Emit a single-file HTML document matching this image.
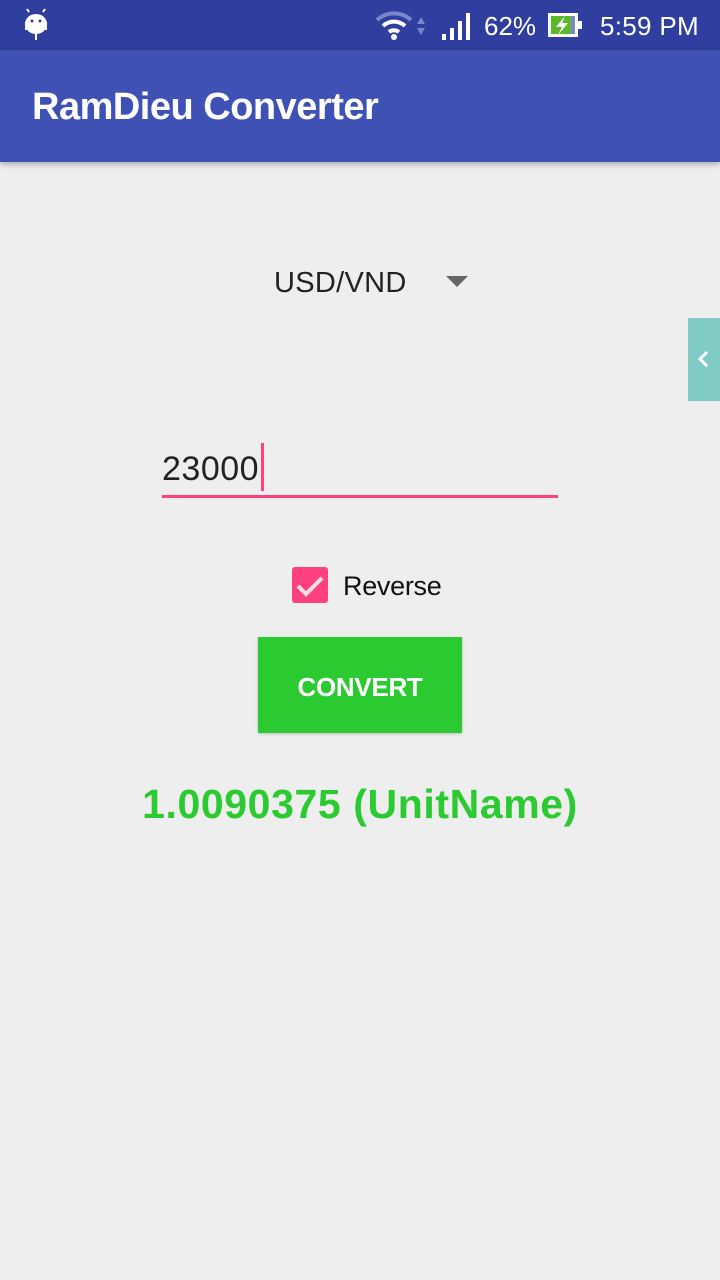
<!DOCTYPE html>
<html><head><style>
body{margin:0;width:720px;height:1280px;background:#eeeeee;font-family:"Liberation Sans",sans-serif;position:relative;overflow:hidden}
.sb{position:absolute;top:0;left:0;width:720px;height:50px;background:#303f9f;color:#fff}
.ab{position:absolute;top:50px;left:0;width:720px;height:112px;background:#3f51b5;box-shadow:0 2px 6px rgba(0,0,0,.3)}
.ab span{position:absolute;left:32px;top:36px;font-size:38px;color:#fff;font-weight:bold;letter-spacing:-0.5px}
.t{position:absolute;white-space:nowrap}
</style></head><body>
<div class="sb">
<svg width="720" height="50" style="position:absolute;left:0;top:0">
<ellipse cx="36" cy="24" rx="11" ry="10" fill="#fff"/><rect x="25" y="22" width="22" height="8" fill="#fff"/>
<line x1="29" y1="12" x2="27" y2="9" stroke="#fff" stroke-width="2"/><line x1="43" y1="12" x2="45" y2="9" stroke="#fff" stroke-width="2"/>
<rect x="35" y="30" width="2" height="10" fill="#fff"/>
<circle cx="32" cy="21" r="1.5" fill="#303f9f"/><circle cx="40" cy="21" r="1.5" fill="#303f9f"/>
<path d="M377 20 A25 25 0 0 1 411 20" stroke="#7986cb" stroke-width="4" fill="none"/>
<path d="M383 26 A16 16 0 0 1 405 26" stroke="#fff" stroke-width="4" fill="none"/>
<path d="M389 32 A8 8 0 0 1 399 32" stroke="#fff" stroke-width="4" fill="none"/>
<circle cx="394" cy="37" r="3" fill="#fff"/>
<path d="M417 24 L421 17 L425 24Z M417 28 L425 28 L421 35Z" fill="#7986cb"/>
<rect x="442" y="34" width="4" height="6" fill="#fff"/><rect x="450" y="28" width="4" height="12" fill="#fff"/><rect x="458" y="21" width="4" height="19" fill="#fff"/><rect x="466" y="13" width="4" height="27" fill="#fff"/>
<rect x="548" y="13" width="30" height="24" fill="#fff"/><rect x="578" y="21" width="4" height="8" fill="#fff"/>
<rect x="551" y="16" width="20" height="18" fill="#5cb82a"/><rect x="571" y="16" width="4" height="18" fill="#7986cb"/>
<path d="M565 16 L556 27 L562 27 L558 35 L568 23 L562 23 Z" fill="#fff"/>
</svg>
<span class="t" style="left:484px;top:11px;font-size:26px">62%</span>
<span class="t" style="left:600px;top:11px;font-size:26px;letter-spacing:0.3px">5:59 PM</span>
</div>
<div class="ab"><span>RamDieu Converter</span></div>
<span class="t" style="left:274px;top:267px;font-size:29px;color:#222;letter-spacing:0.3px">USD/VND</span>
<svg style="position:absolute;left:446px;top:276px" width="22" height="12"><path d="M0 0H22L11 11Z" fill="#666"/></svg>
<div style="position:absolute;left:688px;top:318px;width:32px;height:83px;background:#80cbc4"></div>
<svg style="position:absolute;left:696px;top:350px" width="14" height="18"><path d="M11 2L4 9L11 16" stroke="#fff" stroke-width="3" fill="none"/></svg>
<span class="t" style="left:162px;top:450px;font-size:34px;color:#222;letter-spacing:0.5px">23000</span>
<div style="position:absolute;left:261px;top:443px;width:3px;height:48px;background:#ff4081"></div>
<div style="position:absolute;left:162px;top:495px;width:396px;height:3px;background:#ff4081"></div>
<div style="position:absolute;left:292px;top:567px;width:36px;height:36px;background:#ff4081;border-radius:3px"></div>
<svg style="position:absolute;left:292px;top:567px" width="36" height="36"><path d="M6 19L14 27L30 11" stroke="#f6e0e8" stroke-width="4" fill="none"/></svg>
<span class="t" style="left:343px;top:571px;font-size:27px;color:#111;letter-spacing:-0.3px">Reverse</span>
<div style="position:absolute;left:258px;top:637px;width:204px;height:96px;background:#2bca30;box-shadow:0 1px 3px rgba(0,0,0,.2)"></div>
<span class="t" style="left:258px;width:204px;text-align:center;top:672px;font-size:26px;font-weight:bold;color:#fff;letter-spacing:-0.3px">CONVERT</span>
<span class="t" style="left:0;width:720px;text-align:center;top:781px;font-size:41px;font-weight:bold;color:#2bca30;letter-spacing:0.6px">1.0090375 (UnitName)</span>
</body></html>
